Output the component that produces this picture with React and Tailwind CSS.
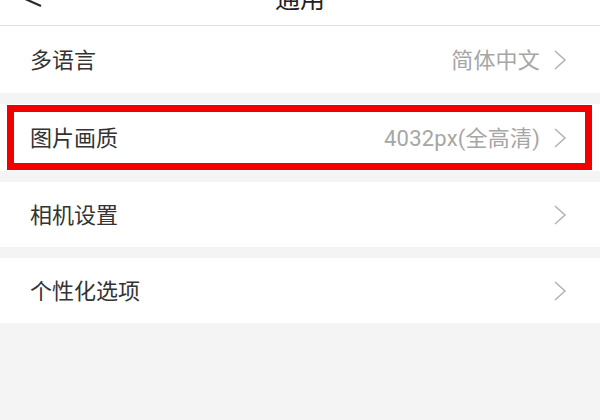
import React from "react"

const font = { fontFamily: 'Roboto, "Noto Sans CJK SC", "Noto Sans", sans-serif' }

const Chevron = () => (
  <svg width="14" height="20" viewBox="0 0 14 20" fill="none" className="shrink-0">
    <path d="M2 1 L12 10 L2 19" stroke="#b4b4b4" strokeWidth="1.6" strokeLinejoin="miter" />
  </svg>
)

const Row = ({ label, value, height, marked }) => (
  <div className={`relative flex items-center bg-white pl-[30px] pr-[33px] ${height}`}>
    <span className="flex-1 pt-[2px] text-[22px] text-[#333333]">{label}</span>
    {value && <span className="mr-[13px] pt-[2px] text-[22px] tracking-[0.2px] text-[#a6a6a6]">{value}</span>}
    <Chevron />
    {marked && (
      <div className="pointer-events-none absolute left-[7px] top-[1px] h-[65px] w-[585px] border-[7px] border-[#f20000]" />
    )}
  </div>
)

export default function App() {
  return (
    <div className="h-[420px] w-[600px] overflow-hidden bg-[#f4f4f4]" style={font}>
      {/* top bar, mostly scrolled off */}
      <div className="h-[26px] overflow-hidden border-b border-[#e2e2e2] bg-white">
        <div className="mt-[-24px] flex h-[48px] items-center px-[18px]">
          <svg width="26" height="24" viewBox="0 0 26 24" fill="none" className="shrink-0">
            <path d="M23 2 L5 10 L23 18" stroke="#2a2a2a" strokeWidth="2.2" />
          </svg>
          <div className="flex-1 pr-[26px] text-center text-[25px] text-[#222222]">通用</div>
        </div>
      </div>

      <div className="flex flex-col gap-[11px]">
        <Row label="多语言" value="简体中文" height="h-[67px]" />
        <Row label="图片画质" value="4032px(全高清)" height="h-[67px]" marked />
        <Row label="相机设置" height="h-[65px]" />
        <Row label="个性化选项" height="h-[65px]" />
      </div>
    </div>
  )
}
